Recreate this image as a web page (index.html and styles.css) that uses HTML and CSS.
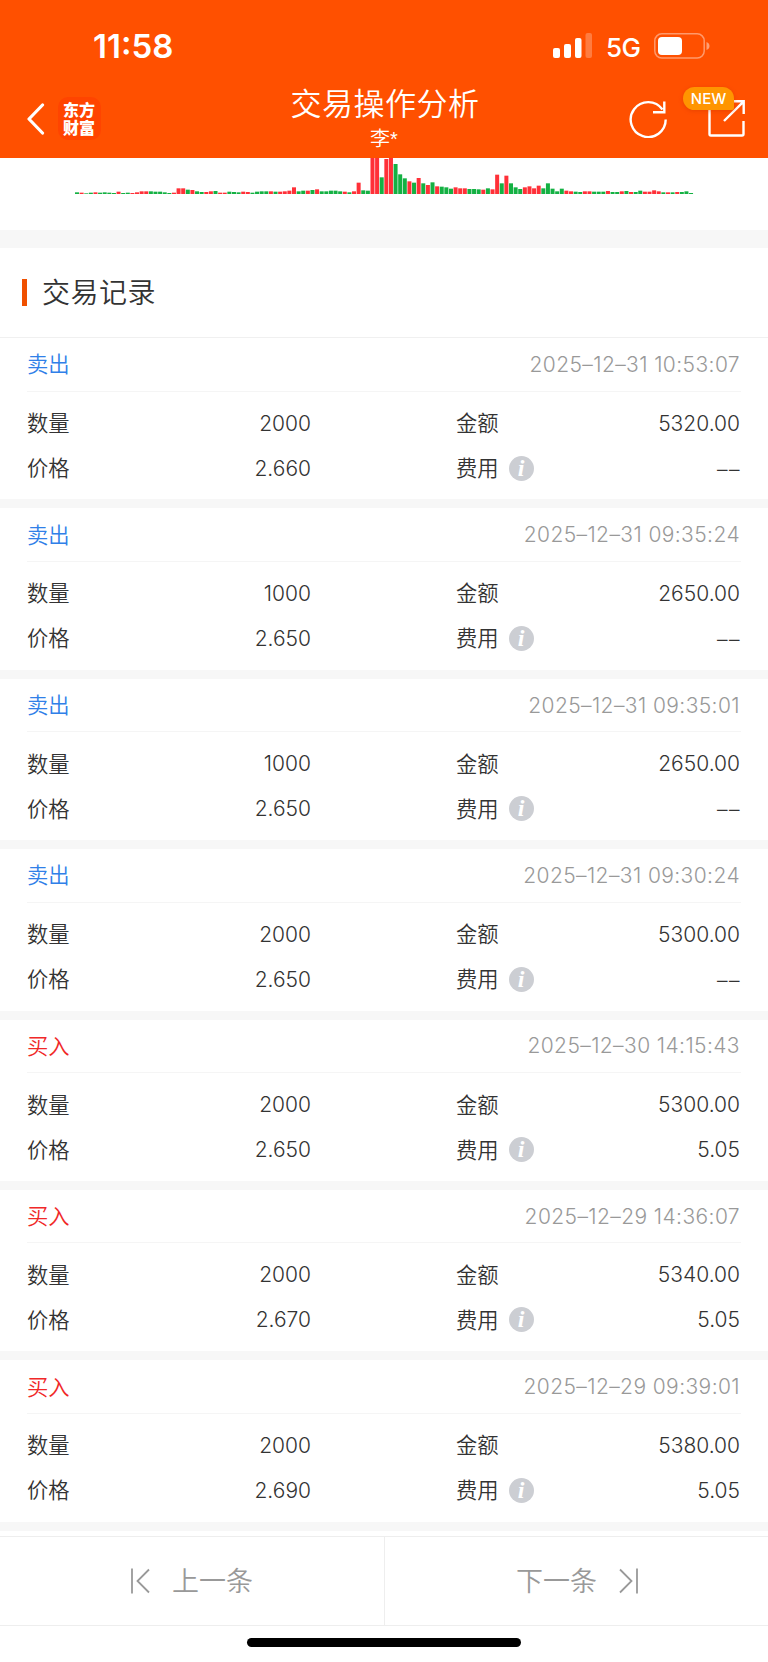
FILE: index.html
```html
<!DOCTYPE html>
<html lang="zh-CN">
<head>
<meta charset="utf-8">
<title>交易操作分析</title>
<link rel="stylesheet" href="styles.css">
</head>
<body>
<header class="header">
  <div class="status">
    <span class="time">11:58</span>
    <div class="status-right">
      <svg class="signal" width="40" height="26" viewBox="0 0 40 26" fill="#fff"><rect x="0" y="15" width="7" height="10" rx="2"/><rect x="11" y="11" width="7" height="14" rx="2"/><rect x="22" y="5" width="6.500" height="20" rx="2"/><rect x="32.500" y="0" width="6.500" height="25" rx="2" opacity=".25"/></svg>
      <span class="net">5G</span>
      <svg class="battery" width="56" height="26" viewBox="0 0 56 26"><rect x=".8" y=".8" width="49.400" height="24.200" rx="7" fill="none" stroke="#fff" stroke-opacity=".42" stroke-width="1.500"/><rect x="4" y="4" width="24" height="18" rx="4" fill="#fff"/><path d="M52.500 9v8c2-.7 3-2.200 3-4s-1-3.300-3-4z" fill="#fff" opacity=".45"/></svg>
    </div>
  </div>
  <nav class="navbar">
    <div class="nav-left">
      <svg width="18" height="32" viewBox="0 0 18 32" fill="none" stroke="#fff" stroke-width="3.200" stroke-linecap="round" stroke-linejoin="round"><path d="M15.500 2 2 16l13.500 14"/></svg>
      <div class="logo">东方财富</div>
    </div>
    <div class="nav-title"><h1>交易操作分析</h1><p>李*</p></div>
    <div class="nav-right">
      <svg width="38" height="38" viewBox="0 0 38 38" fill="none" stroke="#fff" stroke-width="2.400"><path d="M36.700 19.500A17.500 17.500 0 1 1 33.500 9.500M35.300 1.500v10.800H24"/></svg>
      <div class="share">
        <svg width="37" height="37" viewBox="0 0 37 37" fill="none" stroke="#fff" stroke-width="2.400"><path d="M1.500 8v26q0 1.500 1.500 1.500h31q1.500 0 1.500-1.500V21M16 21 35.500 1.700M24 1.300h11.700V14"/></svg>
        <span class="badge">NEW</span>
      </div>
    </div>
  </nav>
</header>
<section class="chart"><svg id="volume" width="620" height="36" viewBox="0 0 620 36"></svg></section>
<main>
  <h2 class="section-title"><span>交易记录</span></h2>
  <div id="records"></div>
</main>
<footer>
  <div class="pager">
    <div class="page"><svg width="20" height="26" viewBox="0 0 20 26" fill="none" stroke="#999" stroke-width="1.800"><path d="M1 .5v25M18 1.500 6.500 13 18 24.500"/></svg><span>上一条</span></div>
    <div class="page next"><span>下一条</span><svg width="20" height="26" viewBox="0 0 20 26" fill="none" stroke="#999" stroke-width="1.800"><path d="M19 .5v25M2 1.500 13.500 13 2 24.500"/></svg></div>
  </div>
  <div class="home"></div>
</footer>
<script src="app.js"></script>
</body>
</html>
```
FILE: styles.css
```css
* { box-sizing: border-box; }
body { margin: 0; width: 768px; height: 1662px; overflow: hidden; display: flex; flex-direction: column; background: #fff; color: #333; font-family: Inter, "Noto Sans CJK SC", sans-serif; }
h1, h2, p { margin: 0; font-weight: 350; }
svg { display: block; flex: none; }

.header { height: 158px; flex: none; background: #ff5000; color: #fff; }
.status { height: 84px; padding: 8px 58px 0 93px; display: flex; justify-content: space-between; align-items: center; }
.time { font-size: 33px; font-weight: 600; letter-spacing: 0; }
.status-right { display: flex; align-items: center; }
.net { font-size: 26px; font-weight: 500; width: 34px; margin: 2px 14px 0 13px; letter-spacing: -.6px; }
.navbar { height: 74px; display: flex; justify-content: space-between; padding: 0 23px 0 27px; }
.nav-left { width: 196px; display: flex; gap: 13px; padding-top: 13px; align-items: flex-start; }
.nav-left > svg { margin-top: 6px; }
.logo { width: 43px; height: 43px; border-radius: 10px; background: #ff4400; padding: 3px 6px 0 5px; font: 900 16px/18px "Noto Sans CJK SC", sans-serif; }
.nav-title { text-align: center; font-family: "Noto Sans CJK SC", sans-serif; }
.nav-title h1 { font-size: 31px; line-height: 36px; letter-spacing: .5px; }
.nav-title p { font-size: 20px; line-height: 39px; font-family: "Liberation Sans", "Noto Sans CJK SC", sans-serif; padding-right: 2px; }
.nav-right { width: 198px; display: flex; justify-content: flex-end; gap: 41px; padding-top: 16px; }
.share { position: relative; }
.badge { position: absolute; left: -25px; top: -13px; width: 51px; height: 23px; border-radius: 12px 12px 2px 12px; background: #ff9500; font-size: 15px; font-weight: 500; line-height: 24px; text-align: center; box-shadow: 0 1px 4px rgba(200, 50, 0, .4); }

.chart { height: 90px; flex: none; padding-left: 75px; border-bottom: 18px solid #f7f7f7; }
.section-title { height: 90px; padding-left: 22px; display: flex; align-items: center; gap: 15px; font-size: 28px; border-bottom: 1px solid #f0f0f0; line-height: 40px; letter-spacing: .5px; font-family: "Noto Sans CJK SC", sans-serif; }
.section-title span { padding-bottom: 3px; }
.section-title::before { content: ""; width: 5px; height: 27px; background: #f05000; }

.record { height: 170.4px; border-bottom: 9px solid #f7f7f7; padding: 0 27px; font-size: 21px; }
.record-head { height: 53.500px; border-bottom: 1.500px solid #f5f5f5; display: flex; align-items: center; justify-content: space-between; padding-right: 1px; }
.side, .label > span { font-weight: 350; font-size: 21.300px; padding-bottom: 3px; }
.sell { color: #3080e8; }
.buy { color: #f02828; }
.date { color: #999; font-weight: 350; letter-spacing: .4px; }
.grid { display: grid; grid-template-columns: 284px 145px 1fr; grid-template-rows: 45px 45px; align-items: center; padding: 9px 1px 0 0; }
.field { display: flex; justify-content: space-between; align-items: center; font-weight: 300; }
.field.right { grid-column: 3; }
.label { display: flex; align-items: center; gap: 10px; }
.empty { letter-spacing: 1.500px; margin-right: -1px; padding-top: 2px; }
.info { width: 25px; height: 25px; border-radius: 50%; background: #ccced3; color: #fff; font: italic bold 24px/24px "Liberation Serif", serif; text-align: center; }

footer { margin-top: auto; height: 126px; background: #fff; position: relative; flex: none; border-top: 1px solid #eee; }
.pager { display: flex; height: 89px; border-bottom: 1px solid #eee; }
.page { width: 385px; display: flex; align-items: center; padding-left: 131px; gap: 21px; border-right: 1px solid #eee; color: #999; font-size: 27px; font-weight: 350; }
.page span { padding-bottom: 3px; }
.page.next { width: 383px; border: 0; }
.home { width: 274px; height: 9px; margin: 12px auto 0; border-radius: 5px; background: #000; }
```
FILE: app.js
```js
const records = [
  ["sell", "2025–12–31 10:53:07", "2000", "5320.00", "2.660", "––"],
  ["sell", "2025–12–31 09:35:24", "1000", "2650.00", "2.650", "––"],
  ["sell", "2025–12–31 09:35:01", "1000", "2650.00", "2.650", "––"],
  ["sell", "2025–12–31 09:30:24", "2000", "5300.00", "2.650", "––"],
  ["buy", "2025–12–30 14:15:43", "2000", "5300.00", "2.650", "5.05"],
  ["buy", "2025–12–29 14:36:07", "2000", "5340.00", "2.670", "5.05"],
  ["buy", "2025–12–29 09:39:01", "2000", "5380.00", "2.690", "5.05"]
];
document.getElementById("records").innerHTML = records.map(([side, date, qty, amount, price, fee]) => `
<article class="record">
  <div class="record-head"><span class="side ${side}">${side === "sell" ? "卖出" : "买入"}</span><span class="date">${date}</span></div>
  <div class="grid">
    <div class="field"><span class="label"><span>数量</span></span><span>${qty}</span></div>
    <div class="field right"><span class="label"><span>金额</span></span><span>${amount}</span></div>
    <div class="field"><span class="label"><span>价格</span></span><span>${price}</span></div>
    <div class="field right"><span class="label"><span>费用</span><i class="info">i</i></span><span class="${fee === "––" ? "empty" : "fee"}">${fee}</span></div>
  </div>
</article>`).join("");

// Volume bars: g = falling, r = rising, followed by height in thirds of a pixel
const bars = "g5 r4 g2 g4 r5 g4 g5 g4 g3 r7 g3 g4 r3 r5 r8 r8 g8 g7 g7 g5 g3 r4 r17 r17 g13 r12 g8 g6 r6 r8 g9 r4 r4 g7 g6 g5 r7 r6 g4 g7 g8 g8 r8 g7 r7 r8 r10 r20 g8 g10 r10 g12 r14 g8 g8 g10 g10 g8 r7 g5 r8 r34 g11 g10 r120 r120 g50 r105 r120 g90 g59 g47 r38 g34 r48 g32 r27 g35 r23 g22 g20 g16 r20 r17 r17 g15 g15 g14 r13 g17 r14 r58 g32 r55 g32 g20 g15 r20 r23 r17 r25 g17 g32 g16 g8 g16 r10 r8 g7 g6 r8 r8 g7 g7 g7 r9 g6 g6 r8 g9 r6 g6 g10 r7 r7 r11 r8 g5 r5 g5 r6 g6 g8 g3".split(" ");
const pitch = 4.617;
document.getElementById("volume").innerHTML = bars.map((bar, i) => {
  const h = bar.slice(1) / 3;
  return `<rect x="${(i * pitch).toFixed(2)}" y="${(36 - h).toFixed(2)}" width="4" height="${h.toFixed(2)}" fill="${bar[0] === "g" ? "#14b143" : "#ff3038"}"/>`;
}).join("");
```
